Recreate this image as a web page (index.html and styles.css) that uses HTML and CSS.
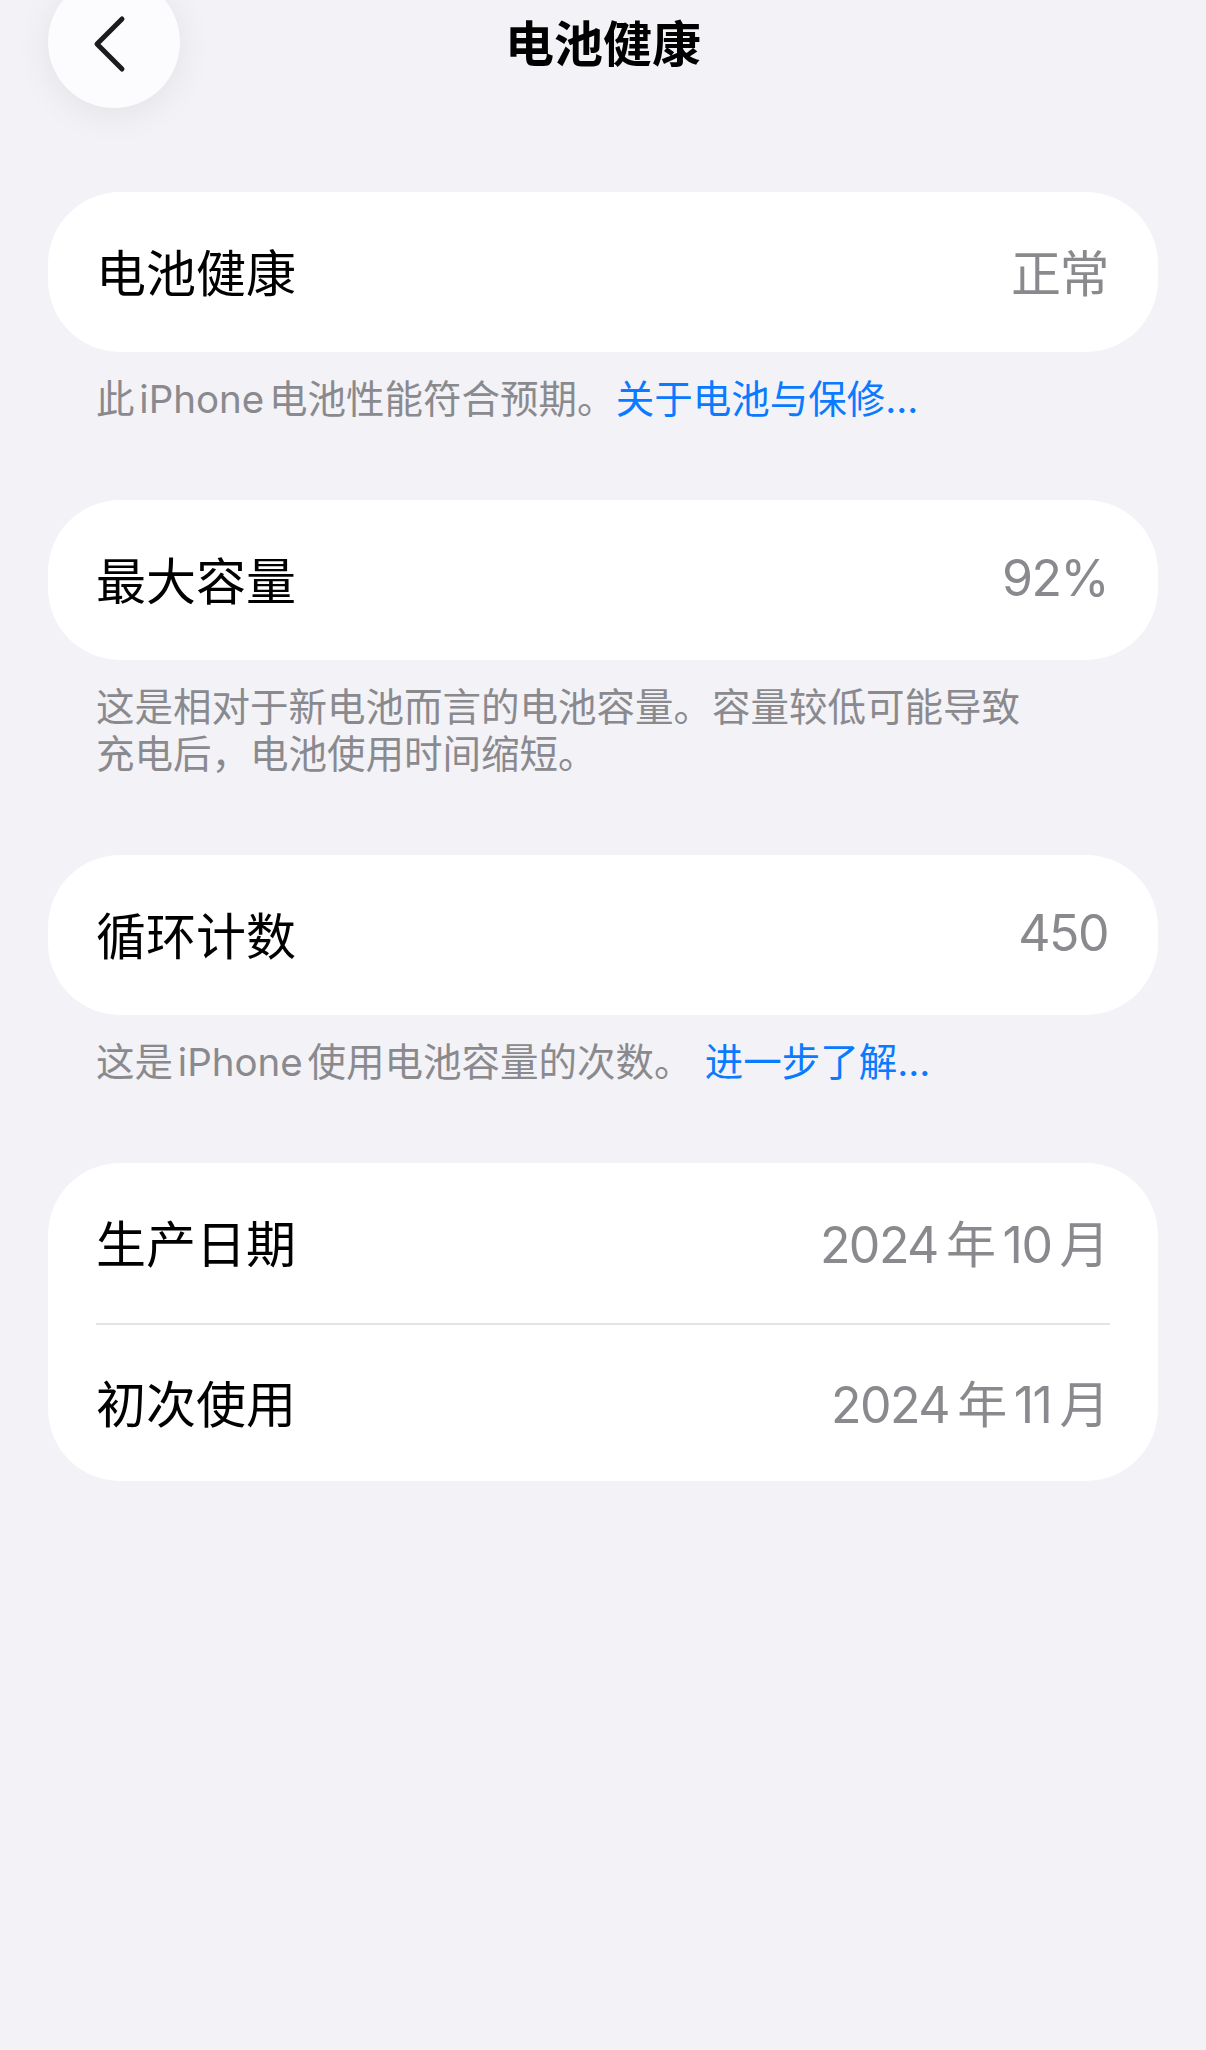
FILE: index.html
```html
<!DOCTYPE html>
<html lang="zh-CN">
<head>
  <meta charset="UTF-8" />
  <meta name="viewport" content="width=device-width, initial-scale=1.0"/>
  <title>电池健康</title>
  <link rel="stylesheet" href="styles.css">
</head>
<body>
  <header class="nav">
    <button class="back-button" aria-label="返回">
      <svg width="132" height="132" viewBox="0 0 132 132">
        <path d="M74 43 L49 68 L74 93" fill="none" stroke="#1c1c1e" stroke-width="5" stroke-linecap="round" stroke-linejoin="round"/>
      </svg>
    </button>
    <h1 class="nav-title">电池健康</h1>
    <div></div>
  </header>

  <main class="content">
    <section class="group">
      <div class="card">
        <div class="row">
          <span class="label">电池健康</span>
          <span class="value">正常</span>
        </div>
      </div>
      <p class="footer">此 iPhone 电池性能符合预期。<a href="#" class="link">关于电池与保修...</a></p>
    </section>

    <section class="group">
      <div class="card">
        <div class="row">
          <span class="label">最大容量</span>
          <span class="value">92%</span>
        </div>
      </div>
      <p class="footer">这是相对于新电池而言的电池容量。容量较低可能导致<br>充电后，电池使用时间缩短。</p>
    </section>

    <section class="group">
      <div class="card">
        <div class="row">
          <span class="label">循环计数</span>
          <span class="value">450</span>
        </div>
      </div>
      <p class="footer">这是 iPhone 使用电池容量的次数。<a href="#" class="link spaced">进一步了解...</a></p>
    </section>

    <section class="group">
      <div class="card">
        <div class="row">
          <span class="label">生产日期</span>
          <span class="value">2024 年 10 月</span>
        </div>
        <div class="row">
          <span class="label">初次使用</span>
          <span class="value">2024 年 11 月</span>
        </div>
      </div>
    </section>
  </main>
</body>
</html>
```

FILE: styles.css
```css
body {
  margin: 0;
  min-height: 2050px;
  background: #f2f2f7;
  font-family: Inter, "Noto Sans CJK SC", sans-serif;
  color: #000;
}

.nav {
  display: grid;
  grid-template-columns: 1fr auto 1fr;
  align-items: start;
  padding: 0 48px;
}

.back-button {
  width: 132px;
  height: 132px;
  margin-top: -24px;
  padding: 0;
  border: none;
  border-radius: 50%;
  background: #fcfcfe;
  box-shadow: 0 6px 36px rgba(0, 0, 0, 0.07);
  display: flex;
  cursor: pointer;
}

.nav-title {
  margin: 0;
  font-size: 49px;
  line-height: 82px;
  font-weight: 700;
  font-family: "Noto Sans CJK SC", sans-serif;
}

.content {
  padding: 84px 48px 0;
}

.group {
  margin-bottom: 77px;
}

.card {
  background: #fff;
  border-radius: 72px;
  padding: 0 50px 0 48px;
}

.row {
  height: 160px;
  box-sizing: border-box;
  padding-bottom: 5px;
  display: flex;
  align-items: center;
  justify-content: space-between;
  font-size: 50px;
}

.row + .row {
  border-top: 2px solid #e3e3e8;
  height: 158px;
  margin-right: -2px;
  padding-right: 2px;
}

.label {
  color: #000;
}

.value {
  color: #8a8a8e;
  letter-spacing: -1.5px;
  word-spacing: -4.5px;
}

.footer {
  margin: 24px 0 0;
  padding-left: 48px;
  font-size: 38.5px;
  line-height: 47px;
  color: #8a8a8e;
  word-spacing: -6px;
}

.footer .link {
  color: #0a7aff;
  text-decoration: none;
}

.footer .spaced {
  margin-left: 12px;
}
```
